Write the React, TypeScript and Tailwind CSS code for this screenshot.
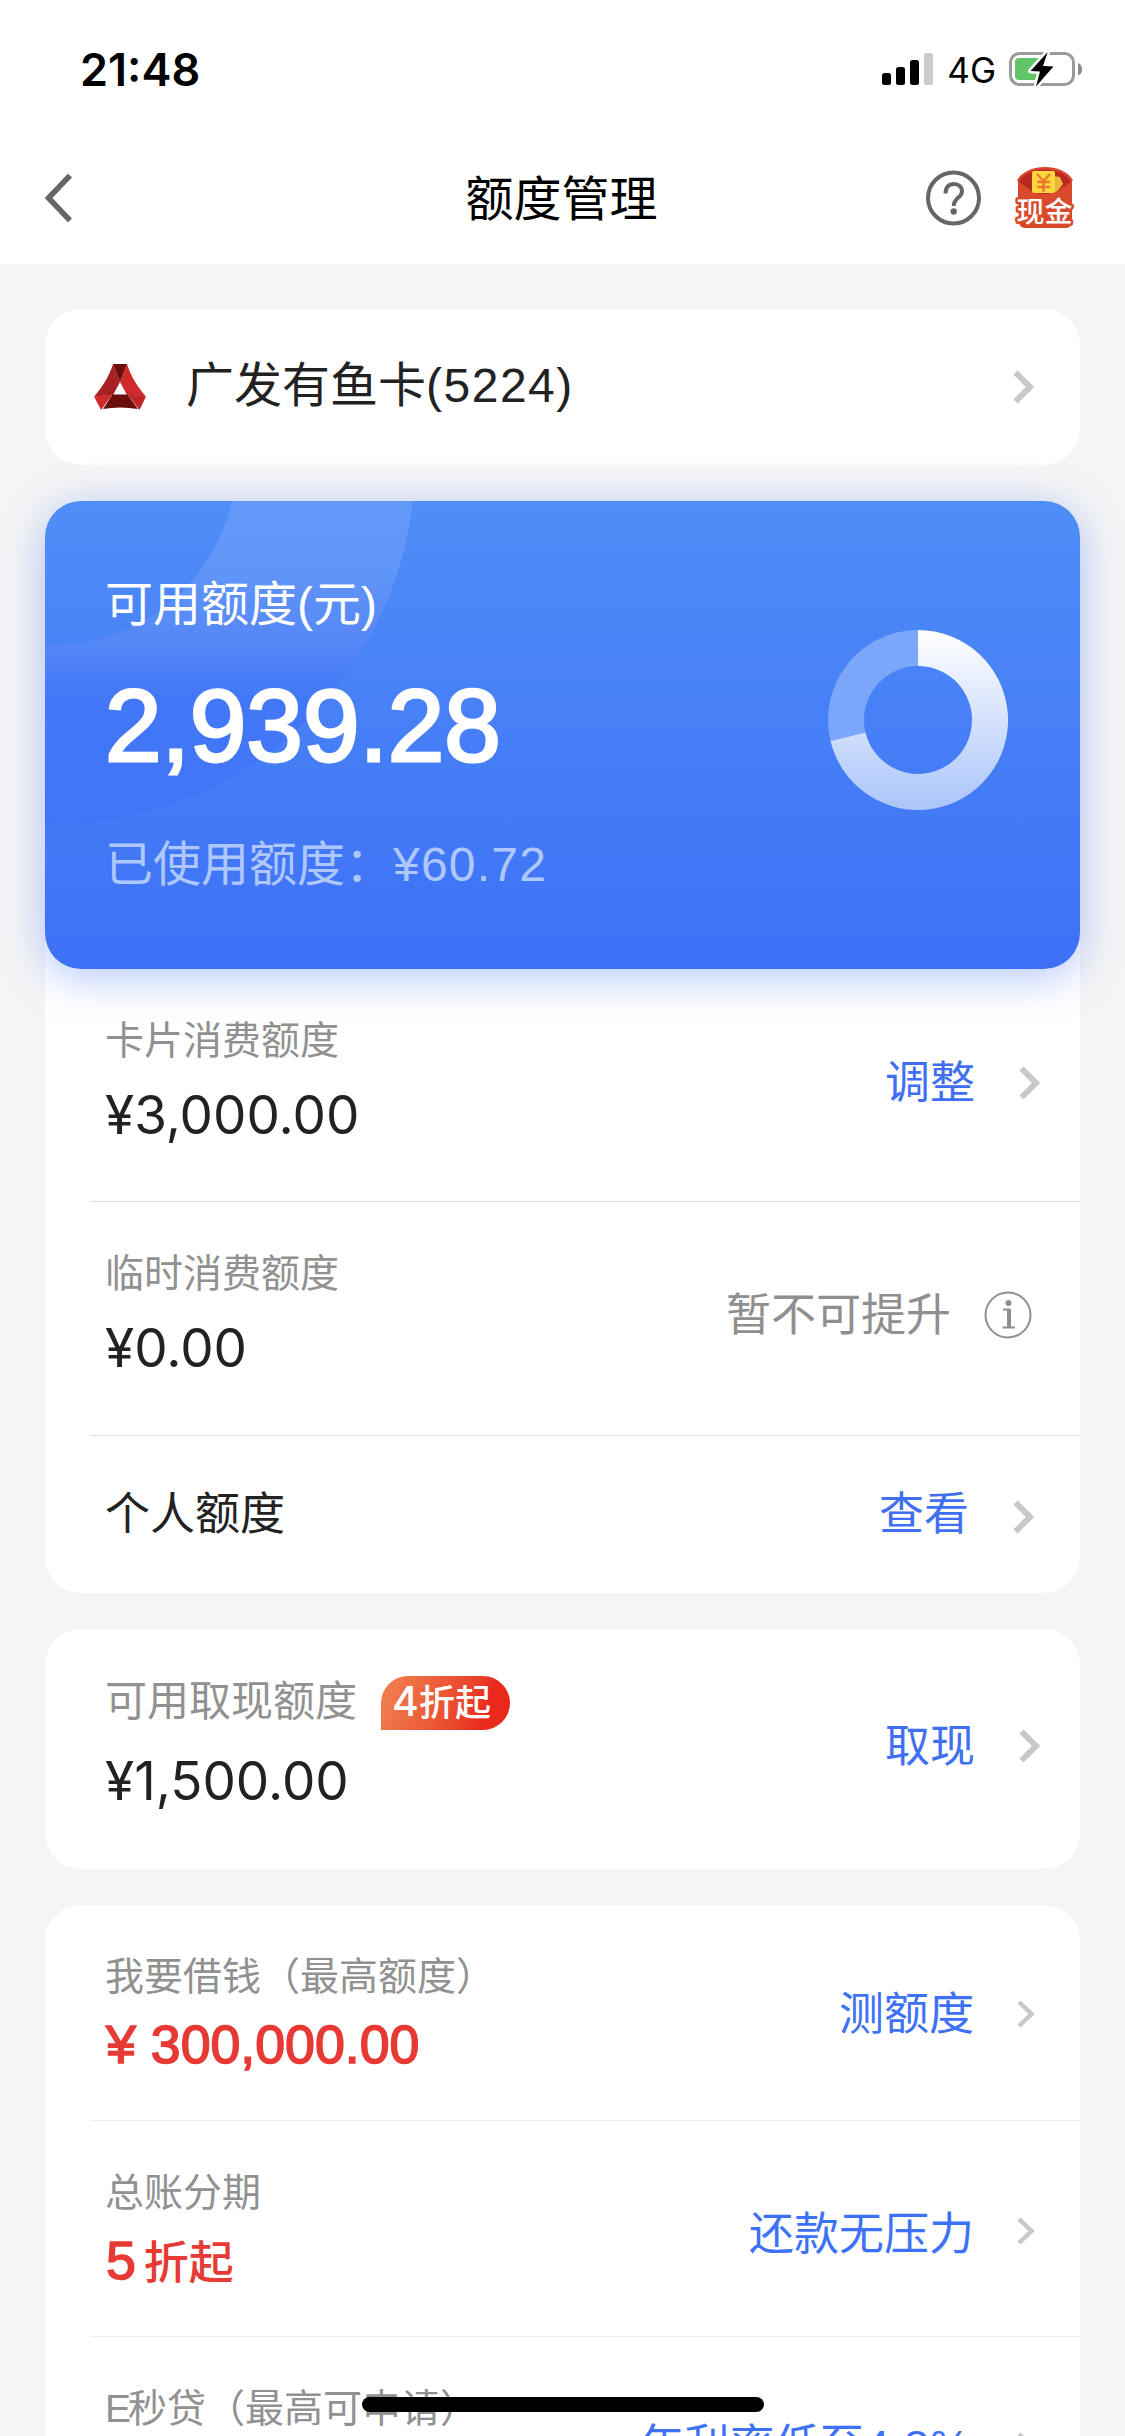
import React from "react"

const sansFont = "font-['Liberation_Sans','Noto_Sans_CJK_SC',sans-serif]"
const interFont = "font-['Inter','Noto_Sans_CJK_SC',sans-serif]"

function SignalIcon() {
    return (
        <svg width="51" height="32" viewBox="0 0 51 32">
            <rect x="0" y="20" width="9" height="12" rx="2.5" fill="#000" />
            <rect x="14" y="14" width="9" height="18" rx="2.5" fill="#000" />
            <rect x="28" y="7" width="9" height="25" rx="2.5" fill="#000" />
            <rect x="42" y="0" width="9" height="32" rx="2.5" fill="#cbcbcb" />
        </svg>
    )
}

function BatteryIcon() {
    return (
        <svg width="74" height="38" viewBox="0 0 74 38">
            <rect x="1.5" y="3.5" width="63" height="31" rx="9" fill="none" stroke="#9b9b9b" strokeWidth="3" />
            <path d="M69 13 C74.500 15 74.500 23.500 69 25.500 Z" fill="#8c8c8c" />
            <rect x="6" y="8" width="25" height="22" rx="4" fill="#61c466" />
            <path d="M38.700 2 L21.500 21 L31 21.500 L27 36.500 L44.500 16.500 L34 16 Z" fill="#000" stroke="#fff" strokeWidth="5" strokeLinejoin="round" />
            <path d="M38.700 2 L21.500 21 L31 21.500 L27 36.500 L44.500 16.500 L34 16 Z" fill="#000" />
        </svg>
    )
}

function BackIcon() {
    return (
        <svg width="28" height="48" viewBox="0 0 28 48">
            <path d="M26 1.500 L4.500 24 L26 46.500" fill="none" stroke="#666" strokeWidth="5.500" />
        </svg>
    )
}

function HelpIcon() {
    return (
        <svg width="56" height="56" viewBox="0 0 56 56">
            <circle cx="28.500" cy="28" r="25.500" fill="none" stroke="#666" strokeWidth="4" />
            <path d="M20.500 23.500 C20.500 17 24 14 28.700 14 C33.500 14 37 17 37 21.500 C37 27.500 28.700 28 28.700 36" fill="none" stroke="#666" strokeWidth="4" />
            <circle cx="28.700" cy="41.500" r="3.200" fill="#666" />
        </svg>
    )
}

function CashIcon() {
    return (
        <svg width="60" height="62" viewBox="0 0 60 62">
            <path d="M4 14 C14 -3 48 -3 58 14 L58 34 L4 34 Z" fill="#b8281f" />
            <path d="M4 14 C14 -3 48 -3 58 14" fill="none" stroke="#d9452b" strokeWidth="2.500" />
            <path d="M40 9 L46 10 L49 17 L42 26 L38 26 Z" fill="#eab63a" />
            <path d="M4 14 L16 23 C22 28 38 28 45 23 L58 14 L58 54 Q58 61 52 61 L11 61 Q5 61 5 54 Z" fill="#d84a2b" />
            <rect x="18" y="4" width="23" height="22" rx="2" fill="#fbd93c" />
            <path d="M23 7 L29.500 14 L36 7 M29.500 14 V25 M23 15 H36 M23 20 H36" fill="none" stroke="#ee7a2f" strokeWidth="2.500" />
            <text x="30.500" y="54.500" textAnchor="middle" fontSize="28" fontWeight="500" className={sansFont} fill="#fff" stroke="#d84a2b" strokeWidth="5" strokeLinejoin="round" paintOrder="stroke">现金</text>
        </svg>
    )
}

function BankLogo() {
    return (
        <svg width="52" height="47" viewBox="0 0 52 47">
            <path d="M19 0 C15 13 7 25 0 32.500 L19 31 L26 18 Z" fill="#a82023" />
            <path d="M33 0 C37 13 45 25 52 32.500 L33 31 L26 18 Z" fill="#d12a2c" />
            <path d="M19 0 L33 0 L26 18 Z" fill="#6b0d0b" />
            <path d="M18.500 30.500 L33.500 30.500 L44 45 Q26 42 9 45 Z" fill="#6b0d0b" />
            <path d="M0 32.500 L18.500 30.500 L7 46 Z" fill="#d12a2c" />
            <path d="M52 32.500 L33.500 30.500 L45.500 46 Z" fill="#c02527" />
        </svg>
    )
}

function Chevron({ small }: { small?: boolean }) {
    if (small) {
        return (
            <svg width="18" height="28" viewBox="0 0 18 28" className="shrink-0">
                <path d="M2 2 L14.500 14 L2 26" fill="none" stroke="#c8c8cb" strokeWidth="4.500" />
            </svg>
        )
    }
    return (
        <svg width="22" height="34" viewBox="0 0 22 34" className="shrink-0">
            <path d="M2.500 2.500 L17 17 L2.500 31.500" fill="none" stroke="#c8c8cb" strokeWidth="6" />
        </svg>
    )
}

function InfoIcon() {
    return (
        <svg width="48" height="48" viewBox="0 0 48 48" className="shrink-0">
            <circle cx="24" cy="24" r="22.500" fill="none" stroke="#8f8f8f" strokeWidth="2" />
            <circle cx="24.500" cy="12" r="3" fill="#8f8f8f" />
            <path d="M19 18.500 H25 V36 M18.500 36.500 H31" fill="none" stroke="#8f8f8f" strokeWidth="2.200" />
            <path d="M25 18 V37" stroke="#8f8f8f" strokeWidth="4" />
        </svg>
    )
}

function UsageRing() {
    return (
        <svg width="180" height="180" viewBox="0 0 180 180">
            <defs>
                <linearGradient id="ring" x1="0" y1="0" x2="0" y2="180" gradientUnits="userSpaceOnUse">
                    <stop offset="0" stopColor="#fff" />
                    <stop offset="1" stopColor="#abc5fa" />
                </linearGradient>
            </defs>
            <path d="M90 0 A90 90 0 0 0 2.500 110.900 L37.500 102.500 A54 54 0 0 1 90 36 Z" fill="#7ca6f9" />
            <path d="M90 0 A90 90 0 1 1 2.500 110.900 L37.500 102.500 A54 54 0 1 0 90 36 Z" fill="url(#ring)" />
        </svg>
    )
}

function CardArc() {
    return (
        <svg width="420" height="340" viewBox="0 0 420 340" className="absolute left-0 top-0">
            <defs>
                <linearGradient id="arc" x1="0" y1="0" x2="0" y2="330" gradientUnits="userSpaceOnUse">
                    <stop offset="0" stopColor="#6399f9" />
                    <stop offset="0.2" stopColor="#6196f8" />
                    <stop offset="0.43" stopColor="#5587f7" />
                    <stop offset="0.6" stopColor="#4277f7" />
                    <stop offset="1" stopColor="#4075f6" />
                </linearGradient>
            </defs>
            <circle cx="8" cy="-39" r="272.500" fill="none" stroke="url(#arc)" strokeWidth="179" />
        </svg>
    )
}

type RowProps = {
    label: React.ReactNode
    amount: React.ReactNode
    amountClass: string
    action: React.ReactNode
    rowClass: string
    actionClass: string
    labelClass?: string
    badge?: React.ReactNode
    icon: React.ReactNode
}

function LimitRow({ label, amount, amountClass, action, rowClass, actionClass, labelClass, badge, icon }: RowProps) {
    return (
        <div className={`flex justify-between pl-[60px] ${rowClass}`}>
            <div className="pt-[41px]">
                <div className="flex items-center h-[60px]">
                    <span className={`whitespace-nowrap text-[#919191] ${labelClass ?? "text-[39px]"}`}>{label}</span>
                    {badge && (
                        <span className={`ml-[24px] mt-[5px] flex h-[54px] w-[129px] items-center rounded-[27px] rounded-bl-none bg-linear-110 from-[#ef8352] to-[#e8291c] to-80% pl-[11px] text-[36px] font-medium text-white ${interFont}`}>{badge}</span>
                    )}
                </div>
                <div className={`whitespace-nowrap ${amountClass}`}>{amount}</div>
            </div>
            <div className={`flex items-center text-[45px] ${actionClass}`}>
                {action}
                {icon}
            </div>
        </div>
    )
}

const bigAmount = "mt-[15px] text-[53px] leading-[60px] text-[#222] font-['Inter']"
const redAmount = "mt-[8px] ml-[1px] text-[53.700px] leading-[60px] text-[#e73a35] [-webkit-text-stroke:1.6px_#e73a35]"

export default function App() {
    return (
        <div className={`relative h-[2436px] w-[1125px] overflow-hidden bg-[#f5f5f5] leading-none ${sansFont}`}>
            <header className="h-[264px] bg-white">
                <div className="flex h-[138px] items-center justify-between pl-[80px] pr-[42px]">
                    <span className={`text-[45px] font-semibold text-black ${interFont}`}>21:48</span>
                    <div className="flex items-center">
                        <SignalIcon />
                        <span className={`ml-[14px] mr-[13px] mt-[2px] text-[35px] text-black ${interFont}`}>4G</span>
                        <BatteryIcon />
                    </div>
                </div>
                <div className="grid h-[120px] grid-cols-[1fr_auto_1fr] items-center pl-[44px] pr-[51px]">
                    <BackIcon />
                    <h1 className="ml-[5px] mt-[3px] text-[48px] text-black">额度管理</h1>
                    <div className="flex items-center justify-end gap-[33px]">
                        <HelpIcon />
                        <CashIcon />
                    </div>
                </div>
            </header>

            <main className="flex flex-col gap-9 px-[45px] pt-[45px]">
                <section className="flex h-[156px] items-center rounded-[36px] bg-white pl-[49px] pr-[45px] text-[48px] text-[#222]">
                    <BankLogo />
                    <span className="ml-[40px] flex-1 pb-[3px]">广发有鱼卡<span className="tracking-[1.5px]">(5224)</span></span>
                    <Chevron />
                </section>

                <div>
                    <section className="relative z-10 flex h-[468px] items-center justify-between overflow-hidden rounded-[36px] bg-linear-to-b from-[#4f8df7] to-[#3e70f6] pl-[60px] pr-[72px] text-white shadow-[0_8px_45px_rgba(63,112,246,0.4)]">
                        <CardArc />
                        <div className="relative self-start pt-[74px]">
                            <div className="text-[48px] leading-[60px]">可用额度(元)</div>
                            <div className="mt-[31px] text-[101.700px] leading-[120px] [-webkit-text-stroke:3px_#fff]">2,939.28</div>
                            <div className="mt-[49px] text-[48px] leading-[60px] text-[#aec7fc]">已使用额度：<span className="tracking-[1.2px]">¥60.72</span></div>
                        </div>
                        <div className="relative mt-[-30px]">
                            <UsageRing />
                        </div>
                    </section>
                    {/* runs up behind the blue card so its bottom corners sit on white */}
                    <section className="-mt-9 rounded-b-[36px] bg-white pt-9">
                        <LimitRow label="卡片消费额度" amount="¥3,000.00" amountClass={bigAmount} action="调整"
                            rowClass="h-[232px]" actionClass="h-[228px] gap-[44px] pr-[39px] text-[#416ff4]" icon={<Chevron />} />
                        <div className="ml-[45px] h-px bg-[#e0e0e0]" />
                        <LimitRow label="临时消费额度" amount="¥0.00" amountClass={bigAmount} action="暂不可提升"
                            rowClass="h-[233px]" actionClass="h-[226px] gap-[33px] pr-[48px] text-[#8f8f8f]" icon={<InfoIcon />} />
                        <div className="ml-[45px] h-px bg-[#e0e0e0]" />
                        <div className="flex h-[157px] items-center justify-between pl-[60px] pr-[45px] text-[45px]">
                            <span className="text-[#222]">个人额度</span>
                            <div className="flex items-center gap-[44px] text-[#416ff4]">
                                查看
                                <div className="pt-[5px]">
                                    <Chevron />
                                </div>
                            </div>
                        </div>
                    </section>
                </div>

                <section className="rounded-[36px] bg-white">
                    <LimitRow label="可用取现额度" labelClass="text-[42px] mt-[4px]" badge={<span className="pb-[3px]"><span className="text-[41px]">4</span>折起</span>} amount="¥1,500.00" amountClass={"mt-[21px] text-[53px] leading-[60px] text-[#222] font-['Inter']"} action="取现"
                        rowClass="h-[240px]" actionClass="h-[234px] gap-[44px] pr-[39px] text-[#416ff4]" icon={<Chevron />} />
                </section>

                <section className="h-[700px] rounded-t-[36px] bg-white">
                    <LimitRow label="我要借钱（最高额度）" amount="¥ 300,000.00" amountClass={redAmount} action="测额度"
                        rowClass="h-[215px]" actionClass="h-[218px] gap-[43px] pr-[45px] text-[#3d72f8]" icon={<Chevron small />} />
                    <div className="ml-[45px] h-px bg-[#ececec]" />
                    <LimitRow label="总账分期" amount={<>5<span className="ml-[8px] text-[45px] font-medium [-webkit-text-stroke:0]">折起</span></>} amountClass={redAmount} action={<span className="pt-[7px]">还款无压力</span>}
                        rowClass="h-[215px]" actionClass="h-[219px] gap-[43px] pr-[45px] text-[#3d72f8]" icon={<Chevron small />} />
                    <div className="ml-[45px] h-px bg-[#ececec]" />
                    <LimitRow label={<><span className="tracking-[-3px]">E</span>秒贷（最高可申请）</>} amount="" amountClass={redAmount} action={<span>年利率低至<span className="pr-[3px] tracking-[1px]">4.8%</span></span>}
                        rowClass="h-[215px]" actionClass="h-[218px] gap-[43px] pr-[45px] text-[#3d72f8]" icon={<Chevron small />} />
                </section>
            </main>

            <div className="absolute bottom-[24px] left-[362px] z-20 h-[15px] w-[402px] rounded-full bg-black" />
        </div>
    )
}
